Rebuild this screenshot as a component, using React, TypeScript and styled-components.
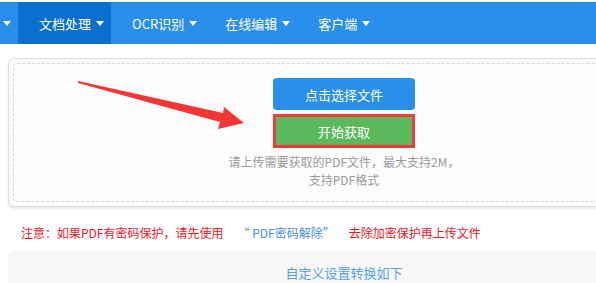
import React from "react";
import styled, { createGlobalStyle } from "styled-components";

const Global = createGlobalStyle`
  html, body { margin: 0; padding: 0; background: #fff; overflow: hidden; }
  body { width: 596px; height: 283px; font-family: "Noto Sans CJK SC", "Noto Sans", sans-serif; }
`;

const Page = styled.div`
  position: relative;
  width: 596px;
  height: 283px;
  padding-top: 2px;
  box-sizing: border-box;
  overflow: hidden;
`;

const Nav = styled.nav`
  display: flex;
  height: 42px;
  width: 100%;
  background: #2a8fea;
`;

const NavItem = styled.div<{ $active?: boolean; $edge?: boolean }>`
  display: flex;
  align-items: center;
  gap: 5px;
  height: 100%;
  padding: ${(p) => (p.$edge ? "0 7px 0 3px" : "0 7px 0 21px")};
  background: ${(p) => (p.$active ? "#0b6fd0" : "transparent")};
  color: #fff;
  font-size: 13px;
  white-space: nowrap;
`;

const Caret = styled.span`
  width: 0;
  height: 0;
  border-left: 4px solid transparent;
  border-right: 4px solid transparent;
  border-top: 5px solid #fff;
`;

const Card = styled.section`
  margin: 14px 0 0 8px;
  width: 672px;
  padding: 4px;
  box-sizing: border-box;
  border: 1px solid #dcdcdc;
  border-radius: 6px;
  background: #fcfcfc;
  box-shadow: 0 2px 3px rgba(0, 0, 0, 0.08);
`;

const DropZone = styled.div`
  display: flex;
  flex-direction: column;
  align-items: center;
  padding: 14px 0 12px;
  border: 1px dashed #d8d8d8;
  border-radius: 4px;
`;

const Button = styled.div<{ $variant: "primary" | "success" }>`
  display: flex;
  align-items: center;
  justify-content: center;
  width: 142px;
  box-sizing: border-box;
  color: #fff;
  font-size: 13px;
  height: ${(p) => (p.$variant === "primary" ? "32px" : "34px")};
  margin-top: ${(p) => (p.$variant === "primary" ? "0" : "4px")};
  background: ${(p) => (p.$variant === "primary" ? "#2a8fea" : "#5cb85c")};
  border-radius: ${(p) => (p.$variant === "primary" ? "4px" : "0")};
  border: ${(p) => (p.$variant === "primary" ? "none" : "3px solid #f23a3a")};
`;

const Hint = styled.p`
  margin: 5px 0 0;
  text-align: center;
  font-size: 12px;
  line-height: 18px;
  color: #9a9a9a;
`;

const Notice = styled.p`
  margin: 17px 0 0;
  padding-left: 21px;
  font-size: 12px;
  line-height: 18px;
  color: #f5141e;
  white-space: nowrap;
`;

const NoticeLink = styled.span`
  color: #4a8ee2;
  margin: 0 14px 0 14px;
`;

const Settings = styled.div`
  margin: 9px 0 0 8px;
  width: 672px;
  height: 60px;
  padding-top: 13px;
  box-sizing: border-box;
  background: #f7f7f7;
  border-radius: 6px 6px 0 0;
  text-align: center;
  font-size: 13px;
  line-height: 18px;
  color: #55a2e8;
`;

const Overlay = styled.svg`
  position: absolute;
  left: 0;
  top: 0;
  pointer-events: none;
`;

export default function App() {
  return (
    <Page>
      <Global />
      <Nav>
        <NavItem $edge>
          <Caret />
        </NavItem>
        <NavItem $active>
          文档处理
          <Caret />
        </NavItem>
        <NavItem>
          OCR识别
          <Caret />
        </NavItem>
        <NavItem>
          在线编辑
          <Caret />
        </NavItem>
        <NavItem>
          客户端
          <Caret />
        </NavItem>
      </Nav>
      <Card>
        <DropZone>
          <Button $variant="primary">点击选择文件</Button>
          <Button $variant="success">开始获取</Button>
          <Hint>
            请上传需要获取的PDF文件，最大支持2M，
            <br />
            支持PDF格式
          </Hint>
        </DropZone>
      </Card>
      <Notice>
        注意：如果PDF有密码保护，请先使用
        <NoticeLink>“ PDF密码解除”</NoticeLink>
        去除加密保护再上传文件
      </Notice>
      <Settings>自定义设置转换如下</Settings>
      <Overlay width="596" height="283" viewBox="0 0 596 283">
        <polygon
          points="78,81 223,113 224,107 244,123 218,129 220,122 78,83"
          fill="#f23535"
        />
      </Overlay>
    </Page>
  );
}
